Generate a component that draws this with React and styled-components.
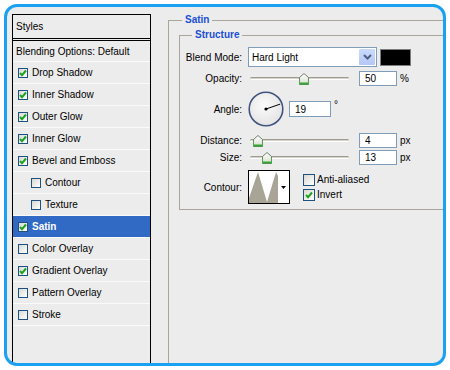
import React from 'react';
import styled, { createGlobalStyle } from 'styled-components';

const Global = createGlobalStyle`
  * { box-sizing: border-box; }
  html, body { margin: 0; padding: 0; background: #fff; }
  body { font-family: "Liberation Sans", Arial, sans-serif; font-size: 10px; color: #000; }
`;

const Frame = styled.div`
  margin: 4px 0 0 4px;
  width: 442px;
  height: 362px;
  border: 3px solid #1ba1f2;
  border-radius: 13px;
  background: #ececec;
  overflow: hidden;
  display: flex;
  padding: 7px 0 0 5px;
`;

const StylesPanel = styled.div`
  width: 139px;
  flex: none;
  margin-bottom: -14px;
  border: 1px solid #000;
  display: flex;
  flex-direction: column;
`;

const PanelHeader = styled.div`
  height: 24px;
  flex: none;
  border-bottom: 1px solid #000;
  margin-bottom: 1px;
  display: flex;
  align-items: center;
  padding-left: 3px;
`;

const Row = styled.div`
  height: 22px;
  flex: none;
  display: flex;
  align-items: center;
  gap: 4px;
  padding-left: ${p => (p.$plain ? 3 : p.$indent ? 18 : 5)}px;
  border-top: ${p => (p.$plain ? '1px solid #000' : 'none')};
  border-bottom: 1px solid #fafafa;
  background: ${p => (p.$selected ? '#316ac5' : 'transparent')};
  color: ${p => (p.$selected ? '#fff' : '#000')};
  font-weight: ${p => (p.$selected ? 'bold' : 'normal')};
`;

const Box = styled.span`
  width: ${p => p.$size}px;
  height: ${p => p.$size}px;
  flex: none;
  border: 1px solid #1c5180;
  background: linear-gradient(135deg, #d8d8d2, #ffffff);
  display: inline-flex;
  align-items: center;
  justify-content: center;
`;

const Main = styled.div`
  flex: 1;
  min-width: 0;
  display: flex;
  flex-direction: column;
  padding-left: 17px;
`;

const Group = styled.fieldset`
  margin: ${p => (p.$outer ? '0 -20px -20px 0' : '0 -30px 0 0')};
  padding: 0;
  border: 1px solid #a9a699;
  flex: ${p => (p.$outer ? 1 : 'none')};
  min-width: 0;
`;

const Legend = styled.legend`
  margin-left: ${p => p.$indent}px;
  padding: 0 3px;
  font-weight: bold;
  color: #1a4fd6;
  line-height: 12px;
  font-size: 10px;
`;

const GroupBody = styled.div`
  display: flex;
  flex-direction: column;
  padding: ${p => p.$pad};
`;

const FormRow = styled.div`
  display: flex;
  align-items: center;
  height: ${p => p.$h}px;
  margin-top: ${p => p.$mt || 0}px;
  flex: none;
`;

const Label = styled.span`
  width: 62px;
  flex: none;
  text-align: right;
  margin-right: 6px;
`;

const Select = styled.div`
  width: 129px;
  height: 20px;
  flex: none;
  border: 1px solid #7f9db9;
  background: #fff;
  display: flex;
  align-items: stretch;
  padding: 1px;
`;

const SelectText = styled.span`
  flex: 1;
  display: flex;
  align-items: center;
  padding-left: 2px;
`;

const SelectButton = styled.span`
  width: 16px;
  background: linear-gradient(#cbdafc, #b4c8f6);
  border-radius: 1px;
  display: flex;
  align-items: center;
  justify-content: center;
`;

const Swatch = styled.span`
  width: 31px;
  height: 17px;
  margin-left: 3px;
  flex: none;
  background: #000;
  border: 1px solid #7c7c7c;
`;

const Slider = styled.div`
  position: relative;
  width: 101px;
  height: 15px;
  margin-right: 10px;
  flex: none;
`;

const Track = styled.div`
  position: absolute;
  left: 2px;
  right: 0;
  top: 6px;
  height: 3px;
  border-radius: 2px;
  border-top: 1px solid #9d9b8f;
  border-bottom: 1px solid #ffffff;
  background: #d6d4ca;
`;

const Thumb = styled.svg`
  position: absolute;
  top: 2px;
`;

const NumInput = styled.input`
  width: ${p => p.$w || 38}px;
  height: ${p => p.$h || 15}px;
  flex: none;
  border: 1px solid #7f9db9;
  background: #fff;
  padding: 0 0 0 5px;
  margin: 0;
  font: inherit;
  color: #000;
  outline: none;
`;

const Unit = styled.span`
  margin-left: 3px;
`;

const Deg = styled.span`
  align-self: flex-start;
  margin-top: 8px;
  margin-left: 3px;
`;

const Dial = styled.svg`
  flex: none;
  margin-right: 5px;
`;

const ContourBox = styled.div`
  width: 42px;
  height: 34px;
  flex: none;
  border: 1px solid #000;
  background: #fff;
  display: flex;
`;

const ContourArrow = styled.span`
  flex: 1;
  display: flex;
  align-items: center;
  justify-content: center;
`;

const CheckCol = styled.div`
  display: flex;
  flex-direction: column;
  gap: 3px;
  margin-left: 13px;
`;

const CheckLine = styled.label`
  display: flex;
  align-items: center;
  gap: 2px;
  height: 12px;
`;

const Check = () => (
  <svg width="8" height="8" viewBox="0 0 8 8">
    <path d="M1 4 L3 6.2 L7 1.5" fill="none" stroke="#21a121" strokeWidth="2" />
  </svg>
);

const CheckBox = ({ checked, size }) => (
  <Box $size={size}>{checked && <Check />}</Box>
);

const SliderControl = ({ value }) => (
  <Slider>
    <Track />
    <Thumb width="10" height="12" viewBox="0 0 10 12" style={{ left: value - 2 }}>
      <defs>
        <linearGradient id="tg" x1="0" y1="0" x2="0" y2="1">
          <stop offset="0" stopColor="#ffffff" />
          <stop offset="1" stopColor="#dcdcd2" />
        </linearGradient>
      </defs>
      <path d="M0.5 11.5 V4.5 L5 0.5 L9.5 4.5 V11.5 Z" fill="url(#tg)" stroke="#6f806f" />
      <path d="M1 10.5 H9" stroke="#35a535" strokeWidth="2" />
      <path d="M0.5 6 V11.5 M9.5 6 V11.5" stroke="#4aa84a" />
    </Thumb>
  </Slider>
);

const effects = [
  { label: 'Drop Shadow', checked: true },
  { label: 'Inner Shadow', checked: true },
  { label: 'Outer Glow', checked: true },
  { label: 'Inner Glow', checked: true },
  { label: 'Bevel and Emboss', checked: true },
  { label: 'Contour', checked: false, indent: true },
  { label: 'Texture', checked: false, indent: true },
  { label: 'Satin', checked: true, selected: true },
  { label: 'Color Overlay', checked: false },
  { label: 'Gradient Overlay', checked: true },
  { label: 'Pattern Overlay', checked: false },
  { label: 'Stroke', checked: false },
];

const angle = 19;
const rad = (angle * Math.PI) / 180;

export default function App() {
  return (
    <>
      <Global />
      <Frame>
        <StylesPanel>
          <PanelHeader>Styles</PanelHeader>
          <Row $plain>Blending Options: Default</Row>
          {effects.map(e => (
            <Row key={e.label} $indent={e.indent} $selected={e.selected}>
              <CheckBox checked={e.checked} size={10} />
              <span>{e.label}</span>
            </Row>
          ))}
        </StylesPanel>
        <Main>
          <Group $outer>
            <Legend $indent={13}>Satin</Legend>
            <GroupBody $pad="3px 0 0 10px">
              <Group>
                <Legend $indent={12}>Structure</Legend>
                <GroupBody $pad="6px 0 5px 0">
                  <FormRow $h={20}>
                    <Label>Blend Mode:</Label>
                    <Select>
                      <SelectText>Hard Light</SelectText>
                      <SelectButton>
                        <svg width="9" height="6" viewBox="0 0 9 6">
                          <path d="M1 1 L4.5 4.5 L8 1" fill="none" stroke="#4d6185" strokeWidth="2" />
                        </svg>
                      </SelectButton>
                    </Select>
                    <Swatch />
                  </FormRow>
                  <FormRow $h={15} $mt={4}>
                    <Label>Opacity:</Label>
                    <SliderControl value={53} />
                    <NumInput readOnly value="50" />
                    <Unit>%</Unit>
                  </FormRow>
                  <FormRow $h={36} $mt={5}>
                    <Label>Angle:</Label>
                    <Dial width="36" height="36" viewBox="0 0 36 36">
                      <defs>
                        <radialGradient id="dg" cx="0.45" cy="0.4" r="0.6">
                          <stop offset="0" stopColor="#fbfbfb" />
                          <stop offset="1" stopColor="#e4e4e4" />
                        </radialGradient>
                      </defs>
                      <circle cx="18" cy="18" r="16.8" fill="url(#dg)" stroke="#42557f" strokeWidth="1.6" />
                      <line x1="18" y1="18" x2={18 + 15 * Math.cos(rad)} y2={18 - 15 * Math.sin(rad)} stroke="#000" strokeWidth="1" />
                      <circle cx="18" cy="18" r="1.6" fill="#000" />
                    </Dial>
                    <NumInput readOnly value="19" $w={42} $h={16} />
                    <Deg>°</Deg>
                  </FormRow>
                  <FormRow $h={15} $mt={6}>
                    <Label>Distance:</Label>
                    <SliderControl value={7} />
                    <NumInput readOnly value="4" />
                    <Unit>px</Unit>
                  </FormRow>
                  <FormRow $h={15} $mt={2}>
                    <Label>Size:</Label>
                    <SliderControl value={16} />
                    <NumInput readOnly value="13" />
                    <Unit>px</Unit>
                  </FormRow>
                  <FormRow $h={34} $mt={5}>
                    <Label>Contour:</Label>
                    <ContourBox>
                      <svg width="29" height="32" viewBox="0 0 29 32">
                        <polygon points="0,32 0,27 9,1 18,31 27,1 29,5 29,32" fill="#a9a596" />
                      </svg>
                      <ContourArrow>
                        <svg width="5" height="3" viewBox="0 0 5 3">
                          <polygon points="0,0 5,0 2.5,3" fill="#000" />
                        </svg>
                      </ContourArrow>
                    </ContourBox>
                    <CheckCol>
                      <CheckLine>
                        <CheckBox checked={false} size={12} />
                        <span>Anti-aliased</span>
                      </CheckLine>
                      <CheckLine>
                        <CheckBox checked size={12} />
                        <span>Invert</span>
                      </CheckLine>
                    </CheckCol>
                  </FormRow>
                </GroupBody>
              </Group>
            </GroupBody>
          </Group>
        </Main>
      </Frame>
    </>
  );
}
